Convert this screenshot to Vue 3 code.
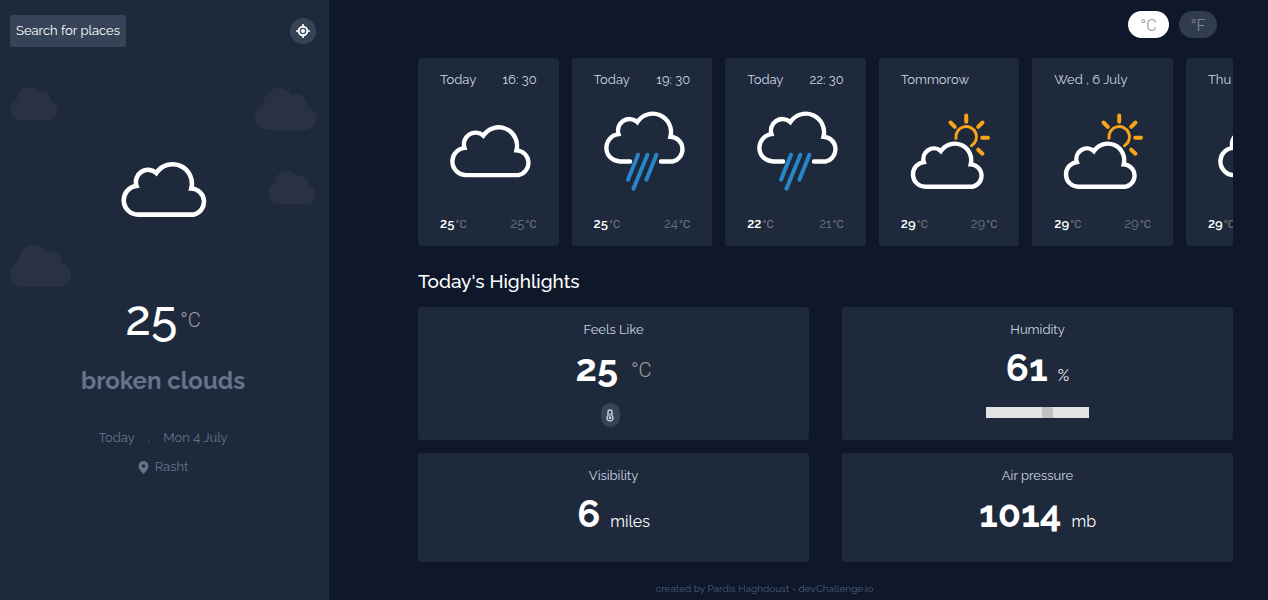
<script setup>
import { ref } from 'vue'

const unit = ref('C')
const humidity = ref(61)

const forecast = [
  { day: 'Today', time: '16: 30', icon: 'cloud', max: 25, min: 25 },
  { day: 'Today', time: '19: 30', icon: 'rain', max: 25, min: 24 },
  { day: 'Today', time: '22: 30', icon: 'rain', max: 22, min: 21 },
  { day: 'Tommorow', time: '', icon: 'sun', max: 29, min: 29 },
  { day: 'Wed , 6 July', time: '', icon: 'sun', max: 29, min: 29 },
  { day: 'Thu , 7 July', time: '', icon: 'cloud', max: 29, min: 28 },
]

const cloudPath =
  'M16 53.7A14.2 14.2 0 0 1 14 25.4A12 12 0 0 1 33.5 12.8A19 19 0 0 1 67.8 28A13 13 0 0 1 70 53.7'
</script>

<template>
  <div class="app">
    <aside class="sidebar">
      <svg v-for="n in 4" :key="n" class="backdrop" :class="'backdrop-' + n" viewBox="0 0 61 42" aria-hidden="true">
        <circle cx="24" cy="15.3" r="15.3" />
        <circle cx="41.7" cy="15.7" r="9.7" />
        <rect x="0" y="15.3" width="44" height="26.7" rx="13.3" />
        <rect x="20" y="18" width="41" height="24" rx="12" />
      </svg>

      <header class="side-head">
        <button class="search" type="button">Search for places</button>
        <button class="locate" type="button" aria-label="Use my location">
          <svg viewBox="0 0 14 14" width="14" height="14">
            <circle cx="7" cy="7" r="4.3" fill="none" stroke="#fff" stroke-width="2" />
            <circle cx="7" cy="7" r="2.1" fill="#fff" />
            <path d="M7 0v2.5M7 11.5V14M0 7h2.5M11.5 7H14" stroke="#fff" stroke-width="1.6" />
          </svg>
        </button>
      </header>

      <section class="current">
        <svg class="current-icon" viewBox="0 0 83 56" width="87" height="57" aria-hidden="true">
          <path :d="cloudPath + 'Z'" class="outline" />
        </svg>
        <p class="current-temp">25<span class="deg">°C</span></p>
        <h1 class="condition">broken clouds</h1>
        <p class="date"><span>Today</span><span>.</span><span>Mon 4 July</span></p>
        <p class="place">
          <svg viewBox="0 0 10 13" width="11" height="13" aria-hidden="true">
            <path fill-rule="evenodd" d="M5 0a5 5 0 0 1 5 5c0 3.400-5 8-5 8S0 8.400 0 5a5 5 0 0 1 5-5zm0 3.200a1.800 1.800 0 1 0 0 3.600 1.800 1.800 0 0 0 0-3.600z" fill="#64748b" />
          </svg>
          <span>Rasht</span>
        </p>
      </section>
    </aside>

    <main class="main">
      <div class="units">
        <button type="button" class="unit unit-c" :class="{ active: unit === 'C' }" @click="unit = 'C'">°C</button>
        <button type="button" class="unit unit-f" :class="{ active: unit === 'F' }" @click="unit = 'F'">°F</button>
      </div>

      <section class="forecast" aria-label="Forecast">
        <article v-for="(item, i) in forecast" :key="i" class="day">
          <div class="day-row"><span>{{ item.day }}</span><span>{{ item.time }}</span></div>
          <svg class="day-icon" viewBox="0 0 90 84" width="90" height="84" aria-hidden="true">
            <g v-if="item.icon === 'cloud'" transform="translate(5 14.300) scale(.965)">
              <path :d="cloudPath + 'Z'" class="outline" />
            </g>
            <template v-else-if="item.icon === 'rain'">
              <g transform="translate(5 .700) scale(.965)">
                <path :d="cloudPath.replace('M16 53.7', 'M26 53.7H16') + 'H58'" class="outline" />
              </g>
              <path class="drops" d="M38 45.700l-10 25M47.400 45.700l-14 34M56.400 45.700l-10 25" />
            </template>
            <template v-else>
              <g transform="translate(4.700 31) scale(.87)">
                <path :d="cloudPath + 'Z'" class="outline thick" />
              </g>
              <path class="rays" d="M59.200 6.500v6.300M43.500 13.500l4.300 4.300M75.500 13.500l-4.300 4.300M75.200 28.700H81M71.200 40.700l4.300 4" />
              <path class="sun" d="M49 29.200a10.300 10.300 0 1 1 15.500 7.500" />
            </template>
          </svg>
          <div class="day-row">
            <span class="max">{{ item.max }}<span class="deg-small">°C</span></span>
            <span class="min">{{ item.min }}<span class="deg-small">°C</span></span>
          </div>
        </article>
      </section>

      <h2 class="title">Today's Highlights</h2>

      <section class="highlights">
        <article class="card">
          <h3>Feels Like</h3>
          <p class="value spaced"><strong>25</strong><span class="deg">°C</span></p>
          <span class="thermo">
            <svg viewBox="0 0 8 13" width="8" height="13" aria-hidden="true">
              <path d="M2 6.800V3a2 2 0 0 1 4 0v3.800a3 3 0 1 1-4 0z" fill="none" stroke="#cbd5e1" stroke-width="1.400" />
              <path d="M4 4v5" stroke="#cbd5e1" stroke-width="1" />
              <circle cx="4" cy="9" r="1.300" fill="#cbd5e1" />
            </svg>
          </span>
        </article>
        <article class="card">
          <h3><label for="humidity">Humidity</label></h3>
          <p class="value"><strong>61</strong><span>%</span></p>
          <input id="humidity" v-model="humidity" class="range" type="range" min="0" max="100" />
        </article>
        <article class="card">
          <h3>Visibility</h3>
          <p class="value"><strong>6</strong><span>miles</span></p>
        </article>
        <article class="card">
          <h3>Air pressure</h3>
          <p class="value"><strong>1014</strong><span>mb</span></p>
        </article>
      </section>

      <footer class="footer">created by Pardis Haghdoust - devChallenge.io</footer>
    </main>
  </div>
</template>

<style>
body {
  background: #0f172a;
}
</style>

<style scoped>
.app {
  display: flex;
  min-height: 100vh;
  background: #0f172a;
  color: #fff;
  font-family: Raleway, Lato, 'Open Sans', sans-serif;
  font-size: 13px;
  line-height: 20px;
}
p, h1, h2, h3 {
  margin: 0;
}
button {
  border: 0;
  padding: 0;
  font: inherit;
  cursor: pointer;
}
svg {
  display: block;
}
.outline {
  fill: none;
  stroke: #fff;
  stroke-width: 4.5;
  stroke-linecap: round;
}
.outline.thick {
  stroke-width: 5;
}
.drops, .rays, .sun {
  fill: none;
  stroke: #2885c7;
  stroke-width: 4;
  stroke-linecap: round;
}
.rays, .sun {
  stroke: #f9a51a;
}
.sun {
  stroke-width: 3;
}

.sidebar {
  position: relative;
  flex: 0 0 25.95%;
  box-sizing: border-box;
  padding: 15px 13px 0 10px;
  background: #1e293b;
}
.backdrop {
  position: absolute;
  width: 61px;
  fill: #283243;
}
.backdrop-1 { left: 10px; top: 87px; width: 48px; }
.backdrop-2 { right: 13px; top: 88px; }
.backdrop-3 { right: 13px; top: 171px; width: 48px; }
.backdrop-4 { left: 10px; top: 245px; }
.side-head {
  display: flex;
  justify-content: space-between;
  align-items: center;
}
.search {
  padding: 0 6px;
  height: 32px;
  border-radius: 2px;
  background: #374357;
  color: #fff;
}
.locate {
  display: grid;
  place-items: center;
  width: 26px;
  height: 26px;
  border-radius: 50%;
  background: #374357;
}
.current {
  position: relative;
  display: flex;
  flex-direction: column;
  align-items: center;
  padding-top: 113px;
  color: #64748b;
}
.current-icon {
  margin-left: 2px;
}
.current-temp {
  display: flex;
  align-items: center;
  gap: 3px;
  margin-top: 76px;
  font-size: 48px;
  font-weight: 500;
  line-height: 50px;
  color: #fff;
}
.deg {
  padding-top: 4px;
  font-family: Roboto, sans-serif;
  font-weight: 300;
  font-size: 20px;
  line-height: 24px;
  color: #a0a0a0;
}
.condition {
  margin-top: 23px;
  font-size: 24px;
  line-height: 30px;
}
.date {
  display: flex;
  gap: 13px;
  margin-top: 32px;
}
.place {
  display: flex;
  align-items: center;
  gap: 6px;
  margin-top: 9px;
}

.main {
  flex: 1;
  min-width: 0;
  padding: 11px 35px 0 89px;
}
.units {
  display: flex;
  justify-content: flex-end;
  gap: 10px;
  padding-right: 16px;
}
.unit {
  width: 38px;
  height: 27px;
  padding-top: 2px;
  border-radius: 14px;
  background: #323c50;
  color: #8b8b8b;
  font-family: Roboto, sans-serif;
  font-weight: 300;
  font-size: 16px;
}
.unit-c {
  width: 41px;
}
.unit.active {
  background: #fff;
}
.forecast {
  display: flex;
  gap: 13px;
  margin-top: 20px;
  overflow: hidden;
}
.day {
  flex: 0 0 17.25%;
  box-sizing: border-box;
  padding: 12px 22px;
  border-radius: 3px;
  background: #1e293b;
  color: #cbd5e1;
}
.day-row {
  display: flex;
  justify-content: space-between;
  height: 20px;
  white-space: nowrap;
}
.day-icon {
  margin: 19px 0 21px 6px;
}
.max {
  font-weight: 600;
  color: #fff;
}
.min {
  color: #64748b;
}
.deg-small {
  margin-left: 1px;
  font-family: Roboto, sans-serif;
  font-weight: 400;
  font-size: 11px;
  color: #7c7f86;
}
.title {
  margin-top: 23px;
  font-size: 19px;
  font-weight: 500;
  line-height: 24px;
}
.highlights {
  display: grid;
  grid-template-columns: 1fr 1fr;
  grid-template-rows: 133px 109px;
  gap: 13px 33px;
  margin-top: 14px;
}
.card {
  display: flex;
  flex-direction: column;
  align-items: center;
  padding-top: 13px;
  border-radius: 3px;
  background: #1e293b;
}
.card h3 {
  font-size: 13px;
  font-weight: 400;
  color: #cbd5e1;
}
.value {
  display: flex;
  align-items: baseline;
  gap: 10px;
  margin-top: 8px;
  font-size: 16px;
  line-height: 40px;
}
.value strong {
  font-size: 38px;
  font-weight: 700;
}
.value.spaced {
  align-items: center;
  gap: 13px;
}
.thermo {
  display: grid;
  place-items: center;
  width: 19px;
  height: 24px;
  margin: 15px 7px 0 0;
  border-radius: 10px;
  background: #374357;
}
.range {
  appearance: none;
  width: 103px;
  height: 11px;
  margin: 11px 0 0;
  background: #e4e4e4;
}
.range::-webkit-slider-thumb {
  appearance: none;
  width: 11px;
  height: 11px;
  background: #c2c2c2;
}
.footer {
  margin-top: 17px;
  padding-right: 122px;
  text-align: center;
  font-size: 10px;
  color: #4b5d7a;
}
</style>
